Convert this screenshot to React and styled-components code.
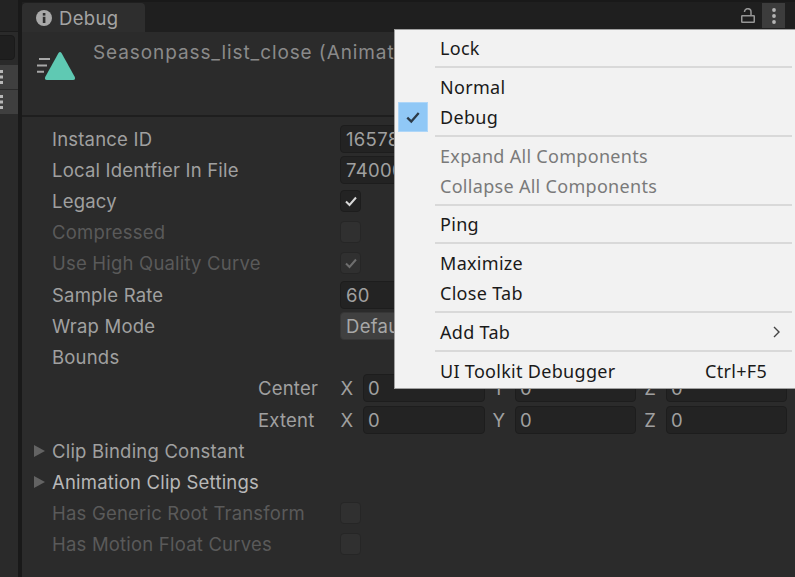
import React from "react";
import styled, { createGlobalStyle } from "styled-components";

const Global = createGlobalStyle`
  html, body { margin: 0; padding: 0; background: #1e1e1e; }
  body { width: 795px; height: 577px; overflow: hidden; font-family: Inter, "Liberation Sans", sans-serif; }
`;

const Page = styled.div`
  position: relative;
  width: 795px;
  height: 577px;
  display: flex;
  overflow: hidden;
  background: #1e1e1e;
`;

const LeftStrip = styled.aside`
  width: 18px;
  flex: none;
  background: #2a2a2a;
  display: flex;
  flex-direction: column;
`;

const StripTop = styled.div`
  height: 32px;
  flex: none;
  background: #232323;
  border-bottom: 1px solid #1b1b1b;
  box-sizing: border-box;
  margin-bottom: 3px;
`;

const StripField = styled.div`
  height: 25px;
  margin-left: -10px;
  width: 25px;
  border-radius: 4px;
  background: #1f1f1f;
  border: 1px solid #1a1a1a;
  box-sizing: border-box;
  margin-bottom: 5px;
`;

const StripRow = styled.div`
  height: 25px;
  background: #3f3f3f;
  border-bottom: 1px solid #2a2a2a;
  box-sizing: border-box;
  display: flex;
  align-items: center;
`;

const Divider = styled.div`
  width: 4px;
  flex: none;
  background: #191919;
`;

const Window = styled.main`
  flex: 1;
  display: flex;
  flex-direction: column;
  min-width: 0;
`;

const TabBar = styled.header`
  height: 32px;
  flex: none;
  display: flex;
  align-items: flex-end;
  justify-content: space-between;
  background: #1f1f1f;
  border-top: 2px solid #191919;
  box-sizing: border-box;
`;

const Tab = styled.div`
  width: 123px;
  height: 29px;
  background: #2e2e2e;
  border-radius: 4px 4px 0 0;
  display: flex;
  align-items: center;
  gap: 7px;
  padding-left: 14px;
  box-sizing: border-box;
  color: #a4a4a4;
  font-size: 18.5px;
  letter-spacing: 0.35px;
`;

const TabActions = styled.div`
  display: flex;
  align-items: center;
  gap: 7px;
  margin-right: 10px;
  height: 25px;
  align-self: flex-start;
  margin-top: 1px;
`;

const KebabButton = styled.div`
  width: 23px;
  height: 25px;
  background: #3c3c3c;
  display: flex;
  align-items: center;
  justify-content: center;
`;

const Content = styled.section`
  flex: 1;
  background: #2b2b2b;
  display: flex;
  flex-direction: column;
`;

const AssetHeader = styled.div`
  height: 85px;
  flex: none;
  border-bottom: 2px solid #1e1e1e;
  box-sizing: border-box;
  display: flex;
  padding-left: 14px;
  gap: 17px;
`;

const AssetIcon = styled.svg`
  margin-top: 18px;
  flex: none;
`;

const AssetTitle = styled.div`
  margin-top: 8px;
  color: #8a8a8a;
  font-size: 19px;
  line-height: 26px;
  white-space: nowrap;
  letter-spacing: 0.9px;
`;

const Rows = styled.div`
  padding-top: 6px;
  display: flex;
  flex-direction: column;
`;

const Row = styled.div`
  height: 31.23px;
  display: grid;
  grid-template-columns: 318px 1fr;
  align-items: center;
`;

const Label = styled.div`
  position: relative;
  padding-left: 30px;
  font-size: 18.5px;
  letter-spacing: 0.2px;
  white-space: nowrap;
  color: ${(p) => (p.$dim ? "#5a5a5a" : p.$bright ? "#b8b8b8" : "#a0a0a0")};
`;

const Arrow = styled.span`
  position: absolute;
  left: 12px;
  top: 50%;
  margin-top: -6px;
  width: 0;
  height: 0;
  border-left: 11px solid #636363;
  border-top: 6px solid transparent;
  border-bottom: 6px solid transparent;
`;

const TextField = styled.div`
  width: 455px;
  height: 28px;
  box-sizing: border-box;
  background: #232323;
  border: 1px solid #1d1d1d;
  border-radius: 4px;
  color: #a0a0a0;
  font-size: 18.5px;
  letter-spacing: 0.3px;
  line-height: 27px;
  padding-left: 5px;
`;

const Dropdown = styled(TextField)`
  background: #404040;
  border-color: #363636;
  color: #a8a8a8;
`;

const Check = styled.div`
  width: 21px;
  height: 22px;
  box-sizing: border-box;
  border-radius: 4px;
  background: ${(p) => (p.$dim ? "#303030" : "#232323")};
  border: 1px solid ${(p) => (p.$dim ? "#262626" : "#1d1d1d")};
  display: flex;
  align-items: center;
  justify-content: center;
`;

const VectorRow = styled.div`
  height: 31.23px;
  display: flex;
  align-items: center;
`;

const VectorLabel = styled.div`
  width: 296px;
  padding-left: 236px;
  box-sizing: border-box;
  font-size: 18.5px;
  letter-spacing: 0.2px;
  color: #a0a0a0;
`;

const VectorFields = styled.div`
  margin-left: 22px;
  display: grid;
  grid-template-columns: 23px 122px 30px 121px 30px 121px;
  align-items: center;
`;

const Axis = styled.span`
  font-size: 18.5px;
  color: #a0a0a0;
  text-align: right;
  padding-right: 10px;
`;

const AxisField = styled(TextField)`
  width: 100%;
  padding-left: 4px;
`;

const Menu = styled.nav`
  position: absolute;
  left: 394px;
  top: 29px;
  width: 401px;
  height: 360px;
  box-sizing: border-box;
  background: #f2f2f2;
  border: 1px solid #a0a0a0;
  border-right: 0;
  font-family: "Noto Sans", "Open Sans", sans-serif;
  font-size: 18px;
  letter-spacing: 0.3px;
  color: #1a1a1a;
  padding-top: 3px;
  display: flex;
  flex-direction: column;
`;

const MenuItem = styled.div`
  height: 30px;
  flex: none;
  position: relative;
  display: flex;
  align-items: center;
  justify-content: space-between;
  padding: 0 28px 0 45px;
  white-space: nowrap;
  color: ${(p) => (p.$disabled ? "#7a7a7a" : "#1a1a1a")};
`;

const MenuRule = styled.hr`
  margin: 3px 3px 3.8px 40px;
  height: 2px;
  flex: none;
  border: 0;
  background: #d9d9d9;
`;

const CheckMark = styled.span`
  position: absolute;
  left: 3px;
  top: 0;
  width: 30px;
  height: 30px;
  background: #90c8f6;
  border: 1px solid #aed6f8;
  box-sizing: border-box;
  display: flex;
  align-items: center;
  justify-content: center;
`;

const SubmenuArrow = styled.svg`
  margin-right: -14px;
`;

const Tick = ({ color = "#d8d8d8", size = 14 }) => (
  <svg width={size} height={size} viewBox="0 0 14 14" fill="none">
    <path d="M2 7.5 L5.5 11 L12 3.5" stroke={color} strokeWidth="2" />
  </svg>
);

const StripDots = () => (
  <svg width="3" height="16" viewBox="0 0 3 16">
    <g fill="#b8b8b8">
      <rect y="1" width="3" height="3" />
      <rect y="6.5" width="3" height="3" />
      <rect y="12" width="3" height="3" />
    </g>
  </svg>
);

const Field = ({ k, children }) => (
  <>
    <Axis>{k}</Axis>
    <AxisField>{children}</AxisField>
  </>
);

export default function App() {
  return (
    <Page>
      <Global />
      <LeftStrip>
        <StripTop />
        <StripField />
        <StripRow><StripDots /></StripRow>
        <StripRow><StripDots /></StripRow>
      </LeftStrip>
      <Divider />
      <Window>
        <TabBar>
          <Tab>
            <svg width="16" height="16" viewBox="0 0 16 16">
              <circle cx="8" cy="8" r="8" fill="#a9a9a9" />
              <rect x="6.8" y="3" width="2.6" height="2.6" fill="#2e2e2e" />
              <rect x="6.8" y="6.8" width="2.6" height="6.2" fill="#2e2e2e" />
            </svg>
            Debug
          </Tab>
          <TabActions>
            <svg width="14" height="15" viewBox="0 0 14 15" fill="none" stroke="#969696" strokeWidth="1.5">
              <rect x="0.75" y="7.75" width="12.5" height="6.5" rx="0.5" />
              <path d="M3.5 4 A3.2 3.2 0 0 1 10 3.8 V7.5" />
            </svg>
            <KebabButton>
              <svg width="6" height="18" viewBox="0 0 6 18">
                <g fill="#b4b4b4">
                  <circle cx="3" cy="3" r="1.9" />
                  <circle cx="3" cy="9" r="1.9" />
                  <circle cx="3" cy="15" r="1.9" />
                </g>
              </svg>
            </KebabButton>
          </TabActions>
        </TabBar>
        <Content>
          <AssetHeader>
            <AssetIcon width="40" height="32" viewBox="0 0 40 32">
              <path d="M22.5 3 Q24 1.2 25.5 3 L38.8 27 Q39.8 30 37 30 L11 30 Q8.2 30 9.2 27 Z" fill="#5fc9b3" />
              <path d="M3 9 H14 M1 15.5 H11 M1 21.7 H8" stroke="#a8a8a8" strokeWidth="2" fill="none" />
            </AssetIcon>
            <AssetTitle>Seasonpass_list_close (Animation Clip)</AssetTitle>
          </AssetHeader>
          <Rows>
            <Row><Label>Instance ID</Label><TextField>16578</TextField></Row>
            <Row><Label>Local Identfier In File</Label><TextField>7400000</TextField></Row>
            <Row><Label>Legacy</Label><Check><Tick /></Check></Row>
            <Row><Label $dim>Compressed</Label><Check $dim /></Row>
            <Row><Label $dim>Use High Quality Curve</Label><Check $dim><Tick color="#6e6e6e" /></Check></Row>
            <Row><Label>Sample Rate</Label><TextField>60</TextField></Row>
            <Row><Label>Wrap Mode</Label><Dropdown>Default</Dropdown></Row>
            <Row><Label>Bounds</Label></Row>
            <VectorRow>
              <VectorLabel>Center</VectorLabel>
              <VectorFields>
                <Field k="X">0</Field><Field k="Y">0</Field><Field k="Z">0</Field>
              </VectorFields>
            </VectorRow>
            <VectorRow>
              <VectorLabel>Extent</VectorLabel>
              <VectorFields>
                <Field k="X">0</Field><Field k="Y">0</Field><Field k="Z">0</Field>
              </VectorFields>
            </VectorRow>
            <Row><Label><Arrow />Clip Binding Constant</Label></Row>
            <Row><Label $bright><Arrow />Animation Clip Settings</Label></Row>
            <Row><Label $dim>Has Generic Root Transform</Label><Check $dim /></Row>
            <Row><Label $dim>Has Motion Float Curves</Label><Check $dim /></Row>
          </Rows>
        </Content>
      </Window>
      <Menu>
        <MenuItem>Lock</MenuItem>
        <MenuRule />
        <MenuItem>Normal</MenuItem>
        <MenuItem>
          <CheckMark><Tick color="#2b3a48" size={16} /></CheckMark>
          Debug
        </MenuItem>
        <MenuRule />
        <MenuItem $disabled>Expand All Components</MenuItem>
        <MenuItem $disabled>Collapse All Components</MenuItem>
        <MenuRule />
        <MenuItem>Ping</MenuItem>
        <MenuRule />
        <MenuItem>Maximize</MenuItem>
        <MenuItem>Close Tab</MenuItem>
        <MenuRule />
        <MenuItem>
          Add Tab
          <SubmenuArrow width="9" height="14" viewBox="0 0 9 14" fill="none">
            <path d="M2 2 L7 7 L2 12" stroke="#444" strokeWidth="1.4" />
          </SubmenuArrow>
        </MenuItem>
        <MenuRule />
        <MenuItem>UI Toolkit Debugger<span>Ctrl+F5</span></MenuItem>
      </Menu>
    </Page>
  );
}
